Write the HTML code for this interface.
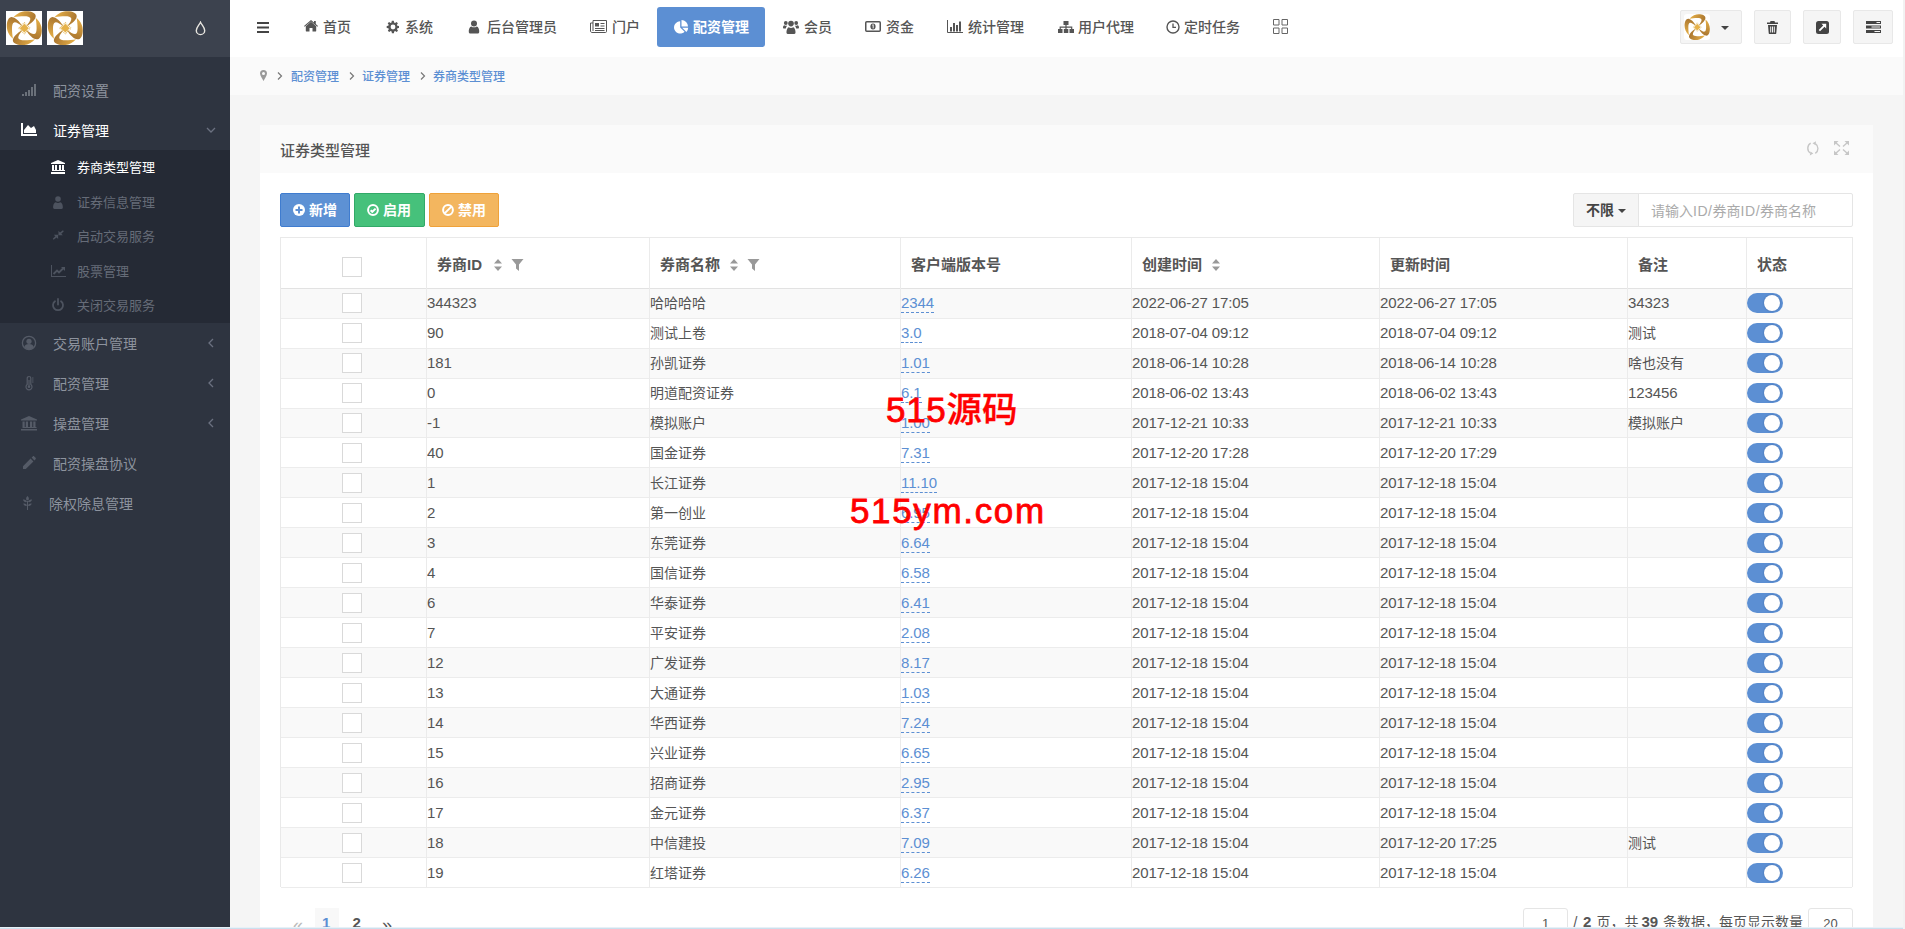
<!DOCTYPE html>
<html lang="zh-CN">
<head>
<meta charset="utf-8">
<title>券商类型管理</title>
<style>
*{box-sizing:border-box;margin:0;padding:0}
html,body{width:1905px;height:929px;overflow:hidden}
body{font-family:"Liberation Sans","Noto Sans CJK SC",sans-serif;font-size:14px;color:#555;background:#f2f2f2;position:relative}
a{text-decoration:none;color:inherit}
svg{display:block}
#app{position:absolute;left:0;top:0;width:1903px;height:929px;background:#f5f5f5;overflow:hidden}
/* sidebar */
#side{position:absolute;left:0;top:0;width:230px;height:929px;background:#2e3440}
#side .brand{position:absolute;left:0;top:0;width:230px;height:57px;background:#3c424e}
.logo{position:absolute;top:11px;width:36px;height:34px;background:#fff;overflow:hidden}
.m1{position:absolute;left:0;width:230px;height:40px;color:#8d939e;font-size:14px;line-height:40px}
.m1 .tx{position:absolute;left:53px;top:.500px;white-space:nowrap}
.m1 .ic{position:absolute;left:20px;top:12px;width:18px;height:16px}
.m1 .ar{position:absolute;left:204.500px;top:14px;width:12px;height:12px}
.m1.on{color:#fff}
#sub{position:absolute;left:0;top:150px;width:230px;height:173px;background:#252a35}
.m2{position:absolute;left:0;width:230px;height:34px;color:#666c78;font-size:13px;line-height:34px}
.m2 .tx{position:absolute;left:77px;top:1px;white-space:nowrap}
.m2 .ic{position:absolute;left:50px;top:10px;width:16px;height:14px}
.m2.on{color:#fff}
/* topbar */
#top{position:absolute;left:230px;top:0;width:1673px;height:57px;background:#fff}
.nv{position:absolute;top:7px;height:40px;line-height:40px;font-size:14px;color:#555;white-space:nowrap}
.nv .ic{position:absolute;top:12px;width:16px;height:16px}
.ni{position:absolute}
.nt{position:absolute;top:7px;line-height:40px;font-size:14px;color:#555;white-space:nowrap;font-weight:500}
.nv.on{background:#5c8fd3;color:#fff;border-radius:3px}
.tb{position:absolute;top:10px;height:34px;background:#f5f5f5;border:1px solid #e8e8e8;border-radius:2px}
/* breadcrumb */
#bc{position:absolute;left:230px;top:57px;width:1673px;height:38px;background:#fafafa;font-size:12px;font-weight:500;line-height:38px;color:#5c8fd3}
#bc span{position:absolute;top:1px;white-space:nowrap}
#bc .sep{color:#777}
/* panel */
#panel{position:absolute;left:260px;top:125px;width:1613px;height:820px;background:#fff}
#ph{position:absolute;left:0;top:0;width:1613px;height:48px;background:#fafafa}
#ph .tt{position:absolute;left:20px;top:0;line-height:51.500px;font-size:15px;color:#555;font-weight:500}
.btn{position:absolute;top:68px;height:34px;border-radius:2px;color:#fff;font-weight:bold;font-size:14px;line-height:32px;border:1px solid}
.btn .ic{position:absolute;left:12px;top:10px;width:12px;height:12px}
.btn .tx{position:absolute;left:28px;top:0;white-space:nowrap}
/* table */
#tb{position:absolute;left:20px;top:112px;width:1573px;height:650px;border:1px solid #e9e9e9;border-bottom:none}
.th{position:absolute;left:0;top:0;width:1571px;height:51px;border-bottom:1px solid #e2e2e2}
.th b{position:absolute;top:0;line-height:54.500px;font-size:15px;color:#555;white-space:nowrap}
.vl{position:absolute;top:0;width:1px;height:649px;background:#ebebeb;z-index:2}
.tr{position:absolute;left:0;width:1571px;height:30px;border-bottom:1px solid #ececec;line-height:28px;font-size:14px;color:#555}
.tr.odd{background:#f9f9f9}
.tr span{position:absolute;top:0;white-space:nowrap}
.tr .n{font-size:15px;letter-spacing:-.1px}
.tr .c1{left:146px}.tr .c2{left:369px}.tr .c3{left:620px;color:#5c8fd3}.tr .c4{left:851px}.tr .c5{left:1099px}.tr .c6{left:1347px}
.tr .c3 u{text-decoration:none;border-bottom:1px dashed #5c8fd3;padding-bottom:1px}
.cb{position:absolute;left:61px;top:4px;width:20px;height:20px;border:1px solid #d9d9d9;background:#fff}
.sw{position:absolute;left:1466px;top:4px;width:36px;height:20px;border-radius:10px;background:#5c8fd3}
.sw i{position:absolute;right:3px;top:2px;width:16px;height:16px;border-radius:9px;background:#fff;box-shadow:0 0 2px rgba(20,50,110,.45)}
.tr.s .cb,.tr.s .sw{top:5px}
.tr.s span{top:1px}
.sorter{position:absolute;top:20px;width:10px;height:14px}
.filter{position:absolute;top:21px;width:13px;height:12px}
.la{font-style:normal;letter-spacing:.550px}
/* watermark */
.wm{position:absolute;color:#f00;font-weight:bold;white-space:nowrap;font-family:"Liberation Sans","Noto Sans CJK SC",sans-serif}
.wm{font-weight:normal;z-index:5}
.wl{-webkit-text-stroke:.8px #f00}
.wc{font-weight:500;font-size:35.500px;-webkit-text-stroke:.3px #f00}
/* pager */
.pg{position:absolute;top:908px;height:30px;line-height:30px;font-size:14px;color:#555;white-space:nowrap}
.ipt{position:absolute;top:908px;height:30px;border:1px solid #e5e5e5;border-radius:3px;background:#fff;font-size:13px;line-height:28px;text-align:center;color:#555}
</style>
</head>
<body>
<div id="app">
<div id="side">
<svg width="0" height="0" style="position:absolute"><defs>
<linearGradient id="gd" x1="0" y1="0" x2="1" y2="1"><stop offset="0" stop-color="#e0b458"/><stop offset="0.5" stop-color="#c28a2c"/><stop offset="1" stop-color="#e6bd63"/></linearGradient>
<path id="bl" d="M-10.800-11.300C-7-15.800-2-17.500 2-17.500C7.500-17.500 11.900-15.500 11.400-12C11-8.800 7.500-5 1.500-1.500C4.500-5.500 6.300-8 6-10C5.700-11.800 3-12.300 0-12.300C-4-12.300-7-12-10.800-11.300Z"/>
<linearGradient id="gb" gradientUnits="userSpaceOnUse" x1="-10" y1="-14" x2="11" y2="-8"><stop offset="0" stop-color="#e6b048"/><stop offset="1" stop-color="#a9752f"/></linearGradient>
<g id="lg"><g transform="translate(18.300 17.200) scale(1 .97)">
<use href="#bl" fill="url(#gb)"/>
<use href="#bl" fill="url(#gb)" transform="rotate(90)"/>
<use href="#bl" fill="url(#gb)" transform="rotate(180)"/>
<use href="#bl" fill="url(#gb)" transform="rotate(270)"/>
<rect x="-3.200" y="-3.200" width="6.400" height="6.400" transform="rotate(45)" fill="#e6b24a"/>
<rect x="-4.100" y="-4.100" width="8.200" height="8.200" transform="rotate(45)" fill="none" stroke="#e3b85c" stroke-width="1" stroke-dasharray="1 .800"/>
</g></g>
</defs></svg>
<div class="brand">
<div class="logo" style="left:6px"><svg width="36" height="34" viewBox="0 0 36 34"><use href="#lg"/></svg></div>
<div class="logo" style="left:47px"><svg width="36" height="34" viewBox="0 0 36 34"><use href="#lg"/></svg></div>
<svg style="position:absolute;left:194px;top:20.500px" width="13" height="15" viewBox="0 0 13 15"><path d="M6.500 1.200C5.300 3.900 2.300 6.600 2.300 9.400a4.200 4.200 0 0 0 8.400 0C10.700 6.600 7.700 3.900 6.500 1.200z" fill="none" stroke="#e8e6e0" stroke-width="1.400"/></svg>
</div>

<div class="m1" style="top:70px"><svg class="ic" viewBox="0 0 18 16"><g fill="#6a7079"><rect x="2" y="12" width="2" height="2"/><rect x="5" y="10" width="2" height="4"/><rect x="8" y="8" width="2" height="6"/><rect x="11" y="5" width="2" height="9"/><rect x="14" y="2" width="2" height="12"/></g></svg><span class="tx">配资设置</span></div>

<div class="m1 on" style="top:110px"><svg class="ic" viewBox="0 0 18 16"><path d="M1 1h2v11h14v2H1zM4 11V8l4-5 3 3 3-2 2 4v3z" fill="#fff"/></svg><span class="tx">证券管理</span><svg class="ar" viewBox="0 0 12 12"><path d="M2 4l4 4 4-4" fill="none" stroke="#6b7180" stroke-width="1.3"/></svg></div>

<div id="sub"></div>
<div class="m2 on" style="top:150px;height:34.5px;line-height:34.5px"><svg class="ic" viewBox="0 0 16 14"><path d="M8 0l7 3v1H1V3zM2 5h2v5h1V5h2v5h2V5h2v5h1V5h2v5h1v1H2zM1 12h14v2H1z" fill="#fff"/></svg><span class="tx">券商类型管理</span></div>
<div class="m2" style="top:184.5px;height:34.5px;line-height:34.5px"><svg class="ic" viewBox="0 0 16 14"><path d="M8 1.2a2.8 2.8 0 1 1 0 5.6 2.8 2.8 0 0 1 0-5.6zM3.2 13c-.4-3 1-5.6 2.600-5.800.6.500 1.300.800 2.200.800s1.600-.3 2.200-.8c1.600.2 3 2.800 2.600 5.800-.2.600-.7 1-1.400 1H4.600c-.700 0-1.200-.4-1.400-1z" fill="#4d535f"/></svg><span class="tx">证券信息管理</span></div>
<div class="m2" style="top:219px;height:34.5px;line-height:34.5px"><svg class="ic" viewBox="0 0 16 14"><path d="M13.500 1.500l1 1-3 3 1.800 1.800H8.200V2.200L10 4zM2.500 12.500l-1-1 3-3L2.700 6.700h5.100v5.100L6 10z" fill="#4d535f" transform="translate(1.500 0) scale(.85)"/></svg><span class="tx">启动交易服务</span></div>
<div class="m2" style="top:253.5px;height:34.5px;line-height:34.5px"><svg class="ic" viewBox="0 0 16 14"><path d="M1 1h1v11h14v1H1z" fill="#4d535f"/><path d="M3.500 10l3.500-3.500 2 2 4-4" fill="none" stroke="#4d535f" stroke-width="1.800"/><path d="M11 3h4v4z" fill="#4d535f"/></svg><span class="tx">股票管理</span></div>
<div class="m2" style="top:288px;height:34.5px;line-height:34.5px"><svg class="ic" viewBox="0 0 16 14"><path d="M5 3.200a5 5 0 1 0 6 0" fill="none" stroke="#4d535f" stroke-width="1.800" stroke-linecap="round"/><path d="M8 1v5.500" stroke="#4d535f" stroke-width="1.800" stroke-linecap="round"/></svg><span class="tx">关闭交易服务</span></div>

<div class="m1" style="top:323px"><svg class="ic" viewBox="0 0 18 16"><circle cx="9" cy="8" r="6.600" fill="none" stroke="#555b67" stroke-width="1.300"/><circle cx="9" cy="6.300" r="2.600" fill="#555b67"/><path d="M4.300 12c.5-2 2-3 4.700-3s4.200 1 4.700 3c-1 1.500-2.800 2.400-4.700 2.400S5.300 13.500 4.300 12z" fill="#555b67"/></svg><span class="tx">交易账户管理</span><svg class="ar" viewBox="0 0 12 12"><path d="M8 2L4 6l4 4" fill="none" stroke="#6b7180" stroke-width="1.300"/></svg></div>
<div class="m1" style="top:363px"><svg class="ic" viewBox="0 0 18 16"><path d="M9 1.500a1.800 1.800 0 0 1 1.800 1.800v6.200a3 3 0 1 1-3.600 0V3.300A1.800 1.800 0 0 1 9 1.500z" fill="none" stroke="#555b67" stroke-width="1.200"/><path d="M9 5v6" stroke="#555b67" stroke-width="1.200"/><circle cx="9" cy="11.800" r="1.300" fill="#555b67"/><path d="M12 3h1.500M12 5h1.500M12 7h1.500" stroke="#555b67" stroke-width="1"/></svg><span class="tx">配资管理</span><svg class="ar" viewBox="0 0 12 12"><path d="M8 2L4 6l4 4" fill="none" stroke="#6b7180" stroke-width="1.300"/></svg></div>
<div class="m1" style="top:403px"><svg class="ic" viewBox="0 0 18 16"><path d="M9 1l8 3.500v1H1v-1zM2.500 6.500h2.200V12h1.100V6.500H8V12h2V6.500h2.200V12h1.100V6.500h2.200V12h1v1h-14zM1 14h16v1.500H1z" fill="#555b67"/></svg><span class="tx">操盘管理</span><svg class="ar" viewBox="0 0 12 12"><path d="M8 2L4 6l4 4" fill="none" stroke="#6b7180" stroke-width="1.300"/></svg></div>
<div class="m1" style="top:443px"><svg class="ic" viewBox="0 0 18 16"><path d="M3 11.200l7.600-7.600 2.800 2.800L5.800 14H3zM11.600 2.600l1.200-1.200c.4-.4 1-.4 1.400 0l1.400 1.400c.4.400.4 1 0 1.400l-1.200 1.200z" fill="#555b67"/></svg><span class="tx">配资操盘协议</span></div>
<div class="m1" style="top:483px"><svg class="ic" viewBox="0 0 18 16"><path d="M7.500 1c1.400 1.200 1.800 2.800 1 4.200h-2C5.700 3.800 6.100 2.200 7.500 1zM3 4.500c2-.3 3.600.6 4 2.500-1.900.500-3.500-.400-4-2.500zM12 4.500c-2-.3-3.600.6-4 2.500 1.900.500 3.500-.400 4-2.500zM3.300 8.500c1.900-.3 3.400.5 3.700 2.300-1.800.500-3.300-.300-3.700-2.300zM11.700 8.500c-1.900-.3-3.400.5-3.700 2.300 1.800.500 3.300-.300 3.700-2.300zM7 6h1v9H7z" fill="#555b67"/></svg><span class="tx" style="left:49px">除权除息管理</span></div>
</div>

<div id="top">
<svg style="position:absolute;left:27px;top:22px" width="12" height="11" viewBox="0 0 12 11"><path d="M0 0h12v2H0zM0 4.500h12v2H0zM0 9h12v2H0z" fill="#444"/></svg>

<svg class="ni" style="left:74px;top:20px" width="14" height="13" viewBox="0 0 14 13"><path d="M7 1.800L1.800 6.200V11c0 .300.200.500.500.500H5.500V8h3v3.500h3.200c.300 0 .500-.200.500-.500V6.200z" fill="#555"/><path d="M7 0L0 5.900l.700.900L7 1.500l6.300 5.300.700-.900-2.200-1.900V1H10v1.500z" fill="#555"/></svg>
<span class="nt" style="left:93px">首页</span>

<svg class="ni" style="left:156px;top:20px" width="14" height="14" viewBox="0 0 14 14"><path d="M7 4.600a2.400 2.400 0 1 0 0 4.800 2.400 2.400 0 0 0 0-4.800zM13 8V6l-1.700-.300-.400-1 1-1.400-1.400-1.400-1.400 1-1-.400L7.800.800h-2L5.500 2.500l-1 .400-1.400-1-1.400 1.400 1 1.400-.400 1L.700 6v2l1.700.300.400 1-1 1.400 1.400 1.400 1.400-1 1 .400.300 1.700h2l.300-1.700 1-.400 1.400 1 1.400-1.400-1-1.400.400-1z" fill="#555" fill-rule="evenodd"/></svg>
<span class="nt" style="left:175px">系统</span>

<svg class="ni" style="left:238px;top:20px" width="12" height="14" viewBox="0 0 12 14"><circle cx="6" cy="3.400" r="3" fill="#555"/><path d="M.800 12.200c-.300-3 .800-5.500 2.500-5.800.8.600 1.600.900 2.700.900s1.900-.300 2.700-.900c1.700.300 2.800 2.800 2.500 5.800-.2.800-.8 1.300-1.600 1.300H2.400c-.8 0-1.400-.5-1.600-1.300z" fill="#555"/></svg>
<span class="nt" style="left:257px">后台管理员</span>

<svg class="ni" style="left:360px;top:20px" width="17" height="13" viewBox="0 0 17 13"><path d="M3 .500h13.500v11c0 .600-.400 1-1 1H2c-.800 0-1.500-.700-1.500-1.500V3H3z" fill="none" stroke="#555" stroke-width="1"/><path d="M3 3v8" stroke="#555" stroke-width="1"/><path d="M5 3h4v3.500H5zM10.500 3h4v1h-4zM10.500 5.500h4v1h-4zM5 8h9.500v1H5zM5 10h9.500v1H5z" fill="#555"/></svg>
<span class="nt" style="left:382px">门户</span>

<div class="nv on" style="left:427px;width:108px"></div>
<svg class="ni" style="left:444px;top:20px" width="15" height="14" viewBox="0 0 15 14"><path d="M6.200 1.200v6.200l4.400 4.400A6.200 6.200 0 1 1 6.200 1.200z" fill="#fff"/><path d="M7.500 0a6.500 6.500 0 0 1 6.500 6.500H7.500z" fill="#fff"/><path d="M8.200 7.800h6a6.300 6.300 0 0 1-1.800 4.200z" fill="#fff"/></svg>
<span class="nt" style="left:463px;color:#fff;font-weight:bold">配资管理</span>

<svg class="ni" style="left:553px;top:20px" width="16" height="14" viewBox="0 0 16 14"><circle cx="8" cy="3.600" r="2.800" fill="#555"/><circle cx="2.800" cy="3" r="1.900" fill="#555"/><circle cx="13.200" cy="3" r="1.900" fill="#555"/><path d="M3.500 13c-.300-3 1-5.500 2.300-5.800.6.500 1.300.800 2.200.800s1.600-.300 2.200-.800c1.300.300 2.600 2.800 2.300 5.800-.2.600-.7 1-1.400 1H4.900c-.7 0-1.200-.4-1.400-1z" fill="#555"/><path d="M0 7.500C0 6 .800 5.300 1.600 5.300c.700.500 1.600.700 2.600.300-.8.900-1.200 1.800-1.400 2.900H1c-.6 0-1-.4-1-1zM16 7.500c0-1.500-.8-2.200-1.600-2.200-.7.500-1.600.700-2.600.300.8.900 1.200 1.800 1.400 2.900H15c.6 0 1-.4 1-1z" fill="#555"/></svg>
<span class="nt" style="left:574px">会员</span>

<svg class="ni" style="left:635px;top:21px" width="16" height="11" viewBox="0 0 16 11"><rect x=".750" y=".750" width="14.500" height="9.500" rx="1" fill="none" stroke="#555" stroke-width="1.500"/><ellipse cx="8" cy="5.500" rx="2.600" ry="3" fill="#555"/><path d="M7.300 4.200l.9-.6v3.800" fill="none" stroke="#fff" stroke-width=".900"/></svg>
<span class="nt" style="left:656px">资金</span>

<svg class="ni" style="left:717px;top:20px" width="16" height="13" viewBox="0 0 16 13"><path d="M.500 0v12.500H16" fill="none" stroke="#555" stroke-width="1"/><path d="M3 7h2v4.500H3zM6 3h2v8.500H6zM9 5h2v6.500H9zM12 1.500h2v10h-2z" fill="#555"/></svg>
<span class="nt" style="left:738px">统计管理</span>

<svg class="ni" style="left:828px;top:20px" width="16" height="14" viewBox="0 0 16 14"><path d="M5.500 1h5v4h-5zM0 9h4.500v4H0zM5.800 9h4.500v4H5.800zM11.500 9H16v4h-4.500z" fill="#555"/><path d="M8 5v2.200M2.200 9V7.200h11.500V9M8 7.200V9" fill="none" stroke="#555" stroke-width="1.200"/></svg>
<span class="nt" style="left:848px">用户代理</span>

<svg class="ni" style="left:936px;top:20px" width="14" height="14" viewBox="0 0 14 14"><circle cx="7" cy="7" r="6" fill="none" stroke="#555" stroke-width="1.400"/><path d="M7 3.500V7.300h3" fill="none" stroke="#555" stroke-width="1.300"/></svg>
<span class="nt" style="left:954px">定时任务</span>

<svg class="ni" style="left:1043px;top:19px" width="15" height="15" viewBox="0 0 15 15"><path d="M.500.500h5.500v5.500H.500zM9 .500h5.500v5.500H9zM.500 9h5.500v5.500H.500zM9 9h5.500v5.500H9z" fill="none" stroke="#666" stroke-width="1"/></svg>

<div class="tb" style="left:1450px;width:62px"></div>
<div style="position:absolute;left:1454px;top:14px;width:26px;height:26px;border-radius:3px;background:#fff;overflow:hidden"><svg width="26" height="26" viewBox="0 0 36 34" preserveAspectRatio="none"><use href="#lg"/></svg></div>
<svg style="position:absolute;left:1491px;top:26px" width="8" height="4" viewBox="0 0 8 4"><path d="M0 0h8L4 4z" fill="#444"/></svg>

<div class="tb" style="left:1524px;width:37px"></div>
<svg style="position:absolute;left:1537px;top:21px" width="11" height="13" viewBox="0 0 11 13"><path d="M3.500 0h4l.500 1.500H11V3H0V1.500h3zM1 4h9l-.700 8c0 .600-.400 1-1 1H2.700c-.600 0-1-.400-1-1zM3.200 5.500v6h1v-6zM5 5.500v6h1v-6zM6.800 5.500v6h1v-6z" fill="#444" fill-rule="evenodd"/></svg>

<div class="tb" style="left:1573px;width:38px"></div>
<svg style="position:absolute;left:1586px;top:21px" width="13" height="13" viewBox="0 0 13 13"><rect x="0" y="0" width="13" height="13" rx="2.500" fill="#444"/><path d="M5.500 2.800h4.700v4.700L8.500 5.800 4 10.300 2.700 9l4.500-4.500z" fill="#fff"/></svg>

<div class="tb" style="left:1623px;width:40px"></div>
<svg style="position:absolute;left:1636px;top:21px" width="15" height="12" viewBox="0 0 15 12"><path d="M0 0h15v3H0zM0 4.500h15v3H0zM0 9h15v3H0z" fill="#444"/><path d="M10.500 1h3.500v1h-3.500zM5.500 5.500H14v1H5.500zM8.500 10H14v1H8.500z" fill="#f5f5f5"/></svg>
</div>

<div id="bc">
<svg style="position:absolute;left:30px;top:13px" width="7" height="11" viewBox="0 0 7 11"><path d="M3.500 0A3.500 3.500 0 0 1 7 3.500C7 5.500 4.500 9 3.500 11 2.500 9 0 5.500 0 3.500A3.500 3.500 0 0 1 3.500 0zm0 2a1.500 1.500 0 1 0 0 3 1.500 1.500 0 0 0 0-3z" fill="#999" fill-rule="evenodd"/></svg>
<svg style="position:absolute;left:47px;top:15px" width="6" height="8" viewBox="0 0 6 8"><path d="M1 .500L4.500 4 1 7.500" fill="none" stroke="#777" stroke-width="1.200"/></svg>
<span style="left:61px">配资管理</span>
<svg style="position:absolute;left:119px;top:15px" width="6" height="8" viewBox="0 0 6 8"><path d="M1 .500L4.500 4 1 7.500" fill="none" stroke="#777" stroke-width="1.200"/></svg>
<span style="left:132px">证券管理</span>
<svg style="position:absolute;left:190px;top:15px" width="6" height="8" viewBox="0 0 6 8"><path d="M1 .500L4.500 4 1 7.500" fill="none" stroke="#777" stroke-width="1.200"/></svg>
<span style="left:203px">券商类型管理</span>
</div>

<div id="panel">
<div id="ph"><span class="tt">证券类型管理</span>
<svg style="position:absolute;left:1546px;top:15.500px" width="14" height="15" viewBox="0 0 14 15"><path d="M4.700 2.200A5.800 5.800 0 0 0 4.300 12M9.300 12.300A5.800 5.800 0 0 0 9.300 2.600" fill="none" stroke="#c6c6c6" stroke-width="1.400"/><path d="M7.300 12.600L3.800 14.600l.700-4zM6.500 2.200L10 .300l-.500 4z" fill="#c6c6c6"/></svg>
<svg style="position:absolute;left:1574px;top:16px" width="15" height="14" viewBox="0 0 15 14"><path d="M0 0h4.500L0 4.500zM15 0v4.500L10.500 0zM0 14V9.500L4.500 14zM15 14h-4.500L15 9.500z" fill="#c6c6c6"/><path d="M1.500 1.500L6 5.500M13.500 1.500L9 5.500M1.500 12.500L6 8.500M13.500 12.500L9 8.500" stroke="#c6c6c6" stroke-width="1.400"/></svg>
</div>
<div class="btn" style="left:20px;width:70px;background:#5d91d4;border-color:#3f7ccf"><svg class="ic" viewBox="0 0 12 12"><circle cx="6" cy="6" r="6" fill="#fff"/><path d="M5 2.500h2V5h2.500v2H7v2.500H5V7H2.500V5H5z" fill="#5c8fd3"/></svg><span class="tx">新增</span></div>
<div class="btn" style="left:94px;width:71px;background:#46c17b;border-color:#32a968"><svg class="ic" viewBox="0 0 12 12"><circle cx="6" cy="6" r="4.900" fill="none" stroke="#fff" stroke-width="2"/><path d="M3.600 6.200l1.700 1.600L8.600 4.600" fill="none" stroke="#fff" stroke-width="2"/></svg><span class="tx">启用</span></div>
<div class="btn" style="left:169px;width:70px;background:#f3b65f;border-color:#efa23a"><svg class="ic" viewBox="0 0 12 12"><circle cx="6" cy="6" r="4.900" fill="none" stroke="#fff" stroke-width="2"/><path d="M2.600 9.400l6.800-6.800" stroke="#fff" stroke-width="2"/></svg><span class="tx">禁用</span></div>
<div style="position:absolute;left:1313px;top:68px;width:66px;height:34px;background:#f5f5f5;border:1px solid #e5e5e5;border-radius:2px 0 0 2px"></div>
<span style="position:absolute;left:1326px;top:68px;line-height:34px;font-size:14px;font-weight:bold;color:#444">不限</span>
<svg style="position:absolute;left:1358px;top:84px" width="8" height="4" viewBox="0 0 8 4"><path d="M0 0h8L4 4z" fill="#444"/></svg>
<div style="position:absolute;left:1378px;top:68px;width:215px;height:34px;background:#fff;border:1px solid #e5e5e5;border-radius:0 2px 2px 0"></div>
<span style="position:absolute;left:1391px;top:68px;line-height:37px;font-size:14px;color:#aaa;white-space:nowrap">请输入<i class="la">ID/</i>券商<i class="la">ID/</i>券商名称</span>
<div id="tb">
<div class="vl" style="left:145px"></div>
<div class="vl" style="left:368px"></div>
<div class="vl" style="left:619px"></div>
<div class="vl" style="left:850px"></div>
<div class="vl" style="left:1098px"></div>
<div class="vl" style="left:1346px"></div>
<div class="vl" style="left:1465px"></div>
<div class="th"><div class="cb" style="top:19px"></div>
<b style="left:156px">券商ID</b><svg class="sorter" style="left:212px" viewBox="0 0 9 14"><path d="M4.500 1L8.500 5.500H.500zM4.500 13L8.500 8.500H.500z" fill="#999"/></svg><svg class="filter" style="left:230px" viewBox="0 0 12 12"><path d="M0 0h12L7.500 5.500V12L4.500 9.500V5.500z" fill="#999"/></svg>
<b style="left:379px">券商名称</b><svg class="sorter" style="left:448px" viewBox="0 0 9 14"><path d="M4.500 1L8.500 5.500H.500zM4.500 13L8.500 8.500H.500z" fill="#999"/></svg><svg class="filter" style="left:466px" viewBox="0 0 12 12"><path d="M0 0h12L7.500 5.500V12L4.500 9.500V5.500z" fill="#999"/></svg>
<b style="left:630px">客户端版本号</b>
<b style="left:861px">创建时间</b><svg class="sorter" style="left:930px" viewBox="0 0 9 14"><path d="M4.500 1L8.500 5.500H.500zM4.500 13L8.500 8.500H.500z" fill="#999"/></svg>
<b style="left:1109px">更新时间</b>
<b style="left:1357px">备注</b>
<b style="left:1476px">状态</b>
</div>
<div class="tr odd" style="top:51px;height:30px"><div class="cb"></div><span class="c1 n">344323</span><span class="c2">哈哈哈哈</span><span class="c3 n"><u>2344</u></span><span class="c4 n">2022-06-27 17:05</span><span class="c5 n">2022-06-27 17:05</span><span class="c6 n">34323</span><div class="sw"><i></i></div></div>
<div class="tr" style="top:81px;height:30px"><div class="cb"></div><span class="c1 n">90</span><span class="c2">测试上卷</span><span class="c3 n"><u>3.0</u></span><span class="c4 n">2018-07-04 09:12</span><span class="c5 n">2018-07-04 09:12</span><span class="c6">测试</span><div class="sw"><i></i></div></div>
<div class="tr odd" style="top:111px;height:30px"><div class="cb"></div><span class="c1 n">181</span><span class="c2">孙凯证券</span><span class="c3 n"><u>1.01</u></span><span class="c4 n">2018-06-14 10:28</span><span class="c5 n">2018-06-14 10:28</span><span class="c6">啥也没有</span><div class="sw"><i></i></div></div>
<div class="tr" style="top:141px;height:30px"><div class="cb"></div><span class="c1 n">0</span><span class="c2">明道配资证券</span><span class="c3 n"><u>6.1</u></span><span class="c4 n">2018-06-02 13:43</span><span class="c5 n">2018-06-02 13:43</span><span class="c6 n">123456</span><div class="sw"><i></i></div></div>
<div class="tr odd" style="top:171px;height:29px"><div class="cb"></div><span class="c1 n">-1</span><span class="c2">模拟账户</span><span class="c3 n"><u>1.00</u></span><span class="c4 n">2017-12-21 10:33</span><span class="c5 n">2017-12-21 10:33</span><span class="c6">模拟账户</span><div class="sw"><i></i></div></div>
<div class="tr s" style="top:200px;height:30px"><div class="cb"></div><span class="c1 n">40</span><span class="c2">国金证券</span><span class="c3 n"><u>7.31</u></span><span class="c4 n">2017-12-20 17:28</span><span class="c5 n">2017-12-20 17:29</span><span class="c6"></span><div class="sw"><i></i></div></div>
<div class="tr odd s" style="top:230px;height:30px"><div class="cb"></div><span class="c1 n">1</span><span class="c2">长江证券</span><span class="c3 n"><u>11.10</u></span><span class="c4 n">2017-12-18 15:04</span><span class="c5 n">2017-12-18 15:04</span><span class="c6"></span><div class="sw"><i></i></div></div>
<div class="tr s" style="top:260px;height:30px"><div class="cb"></div><span class="c1 n">2</span><span class="c2">第一创业</span><span class="c3 n"><u>6.95</u></span><span class="c4 n">2017-12-18 15:04</span><span class="c5 n">2017-12-18 15:04</span><span class="c6"></span><div class="sw"><i></i></div></div>
<div class="tr odd s" style="top:290px;height:30px"><div class="cb"></div><span class="c1 n">3</span><span class="c2">东莞证券</span><span class="c3 n"><u>6.64</u></span><span class="c4 n">2017-12-18 15:04</span><span class="c5 n">2017-12-18 15:04</span><span class="c6"></span><div class="sw"><i></i></div></div>
<div class="tr s" style="top:320px;height:30px"><div class="cb"></div><span class="c1 n">4</span><span class="c2">国信证券</span><span class="c3 n"><u>6.58</u></span><span class="c4 n">2017-12-18 15:04</span><span class="c5 n">2017-12-18 15:04</span><span class="c6"></span><div class="sw"><i></i></div></div>
<div class="tr odd s" style="top:350px;height:30px"><div class="cb"></div><span class="c1 n">6</span><span class="c2">华泰证券</span><span class="c3 n"><u>6.41</u></span><span class="c4 n">2017-12-18 15:04</span><span class="c5 n">2017-12-18 15:04</span><span class="c6"></span><div class="sw"><i></i></div></div>
<div class="tr s" style="top:380px;height:30px"><div class="cb"></div><span class="c1 n">7</span><span class="c2">平安证券</span><span class="c3 n"><u>2.08</u></span><span class="c4 n">2017-12-18 15:04</span><span class="c5 n">2017-12-18 15:04</span><span class="c6"></span><div class="sw"><i></i></div></div>
<div class="tr odd s" style="top:410px;height:30px"><div class="cb"></div><span class="c1 n">12</span><span class="c2">广发证券</span><span class="c3 n"><u>8.17</u></span><span class="c4 n">2017-12-18 15:04</span><span class="c5 n">2017-12-18 15:04</span><span class="c6"></span><div class="sw"><i></i></div></div>
<div class="tr s" style="top:440px;height:30px"><div class="cb"></div><span class="c1 n">13</span><span class="c2">大通证券</span><span class="c3 n"><u>1.03</u></span><span class="c4 n">2017-12-18 15:04</span><span class="c5 n">2017-12-18 15:04</span><span class="c6"></span><div class="sw"><i></i></div></div>
<div class="tr odd s" style="top:470px;height:30px"><div class="cb"></div><span class="c1 n">14</span><span class="c2">华西证券</span><span class="c3 n"><u>7.24</u></span><span class="c4 n">2017-12-18 15:04</span><span class="c5 n">2017-12-18 15:04</span><span class="c6"></span><div class="sw"><i></i></div></div>
<div class="tr s" style="top:500px;height:30px"><div class="cb"></div><span class="c1 n">15</span><span class="c2">兴业证券</span><span class="c3 n"><u>6.65</u></span><span class="c4 n">2017-12-18 15:04</span><span class="c5 n">2017-12-18 15:04</span><span class="c6"></span><div class="sw"><i></i></div></div>
<div class="tr odd s" style="top:530px;height:30px"><div class="cb"></div><span class="c1 n">16</span><span class="c2">招商证券</span><span class="c3 n"><u>2.95</u></span><span class="c4 n">2017-12-18 15:04</span><span class="c5 n">2017-12-18 15:04</span><span class="c6"></span><div class="sw"><i></i></div></div>
<div class="tr s" style="top:560px;height:30px"><div class="cb"></div><span class="c1 n">17</span><span class="c2">金元证券</span><span class="c3 n"><u>6.37</u></span><span class="c4 n">2017-12-18 15:04</span><span class="c5 n">2017-12-18 15:04</span><span class="c6"></span><div class="sw"><i></i></div></div>
<div class="tr odd s" style="top:590px;height:30px"><div class="cb"></div><span class="c1 n">18</span><span class="c2">中信建投</span><span class="c3 n"><u>7.09</u></span><span class="c4 n">2017-12-18 15:04</span><span class="c5 n">2017-12-20 17:25</span><span class="c6">测试</span><div class="sw"><i></i></div></div>
<div class="tr s" style="top:620px;height:30px"><div class="cb"></div><span class="c1 n">19</span><span class="c2">红塔证券</span><span class="c3 n"><u>6.26</u></span><span class="c4 n">2017-12-18 15:04</span><span class="c5 n">2017-12-18 15:04</span><span class="c6"></span><div class="sw"><i></i></div></div>
</div>
</div>
<span class="pg" style="left:293px;color:#bbb;font-size:18px;top:910px">«</span>
<div style="position:absolute;left:315px;top:908px;width:24px;height:30px;background:#f8f8f8"></div>
<span class="pg" style="left:322px;color:#5c8fd3;font-weight:bold;font-size:15px">1</span>
<span class="pg" style="left:352.500px;color:#555;font-weight:bold;font-size:15px">2</span>
<span class="pg" style="left:382px;color:#555;font-size:18px;top:910px">»</span>
<div class="ipt" style="left:1523px;width:45px"><span style="position:relative;top:1px">1</span></div>
<span class="pg" style="left:1573.500px;top:907px">/</span>
<span class="pg" style="left:1583px;top:907px;font-weight:bold;font-size:15px">2</span>
<span class="pg" style="left:1596.500px;top:907px">页，共</span>
<span class="pg" style="left:1641.500px;top:907px;font-weight:bold;font-size:15px">39</span>
<span class="pg" style="left:1663px;top:907px">条数据，每页显示数量</span>
<div class="ipt" style="left:1808px;width:45px"><span style="position:relative;top:1px">20</span></div>
<div style="position:absolute;left:0;top:927px;width:1905px;height:1px;background:#e8f0f6"></div>
<div style="position:absolute;left:0;top:928px;width:1905px;height:1px;background:#cbe0ee"></div>

<span class="wm" style="left:886px;top:385px;font-size:35px;line-height:50px"><span class="wl" style="letter-spacing:.700px">515</span><span class="wc">源码</span></span>
<span class="wm" style="left:850px;top:486px;font-size:35px;line-height:50px"><span class="wl" style="letter-spacing:1.650px">515ym.com</span></span>

</div>
</body>
</html>
